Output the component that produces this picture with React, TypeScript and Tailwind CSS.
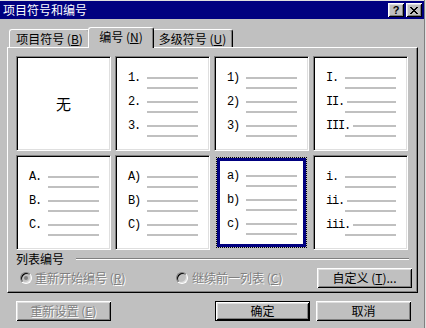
const cjk = "font-['Noto_Sans_CJK_SC','Noto_Sans_CJK_JP',sans-serif]";
const mono = "font-['Liberation_Mono','DejaVu_Sans_Mono',monospace]";

const btn =
  "shadow-[inset_1px_1px_0_#fff,inset_-1px_-1px_0_#000,inset_2px_2px_0_#dfdfdf,inset_-2px_-2px_0_#808080]";
const disabledText = "text-[#808080] [text-shadow:1px_1px_0_#fff]";

const styles = [
  ["1.", "2.", "3."],
  ["1)", "2)", "3)"],
  ["I.", "II.", "III."],
  ["A.", "B.", "C."],
  ["A)", "B)", "C)"],
  ["a)", "b)", "c)"],
  ["i.", "ii.", "iii."],
];

function Item({ n }: { n: string }) {
  return (
    <div className="flex flex-col">
      <div className="flex h-[12px] items-center">
        <span className={`${mono} min-w-[19px] pr-[3px] text-[12px] leading-none tracking-[-1.2px] text-black`}>
          {n}
        </span>
        <span className="h-[2px] flex-1 bg-[#c0c0c0]" />
      </div>
      <div className="ml-[19px] mt-[3px] h-[2px] bg-[#c0c0c0]" />
    </div>
  );
}

function List({ items }: { items: string[] }) {
  return (
    <div className="flex flex-col gap-[7px]">
      {items.map((n) => (
        <Item key={n} n={n} />
      ))}
    </div>
  );
}

function Cell({ items, selected }: { items?: string[]; selected?: boolean }) {
  if (selected) {
    return (
      <div className="h-[95px] w-[95px] p-[2px]">
        <div className="h-full w-full border border-dotted border-black">
          <div className="h-full w-full border-[3px] border-[#000080] bg-white pl-[7px] pr-[6px] pt-[9px]">
            {items && <List items={items} />}
          </div>
        </div>
      </div>
    );
  }
  return (
    <div className="h-[95px] w-[95px] border border-b-white border-l-[#808080] border-r-white border-t-[#808080] bg-white shadow-[inset_1px_1px_0_#000,inset_-1px_-1px_0_#dfdfdf]">
      {items ? (
        <div className="pl-[12px] pr-[11px] pt-[15px]">
          <List items={items} />
        </div>
      ) : (
        <div className="flex h-full items-center justify-center text-[15px] text-black">无</div>
      )}
    </div>
  );
}

function Tab({ label, k, active, w }: { label: string; k: string; active?: boolean; w: string }) {
  return (
    <div
      className={`${w} flex items-center justify-center rounded-t-[3px] border-l border-t border-l-white border-t-white border-r border-r-black bg-[#c0c0c0] shadow-[inset_-1px_0_0_#808080] text-black ${
        active ? "relative z-10 -mx-[2px] -mb-px h-[21px] pb-[2px]" : "h-[18px]"
      }`}
    >
      {label} (<u>{k}</u>)
    </div>
  );
}

function Radio({ checked }: { checked?: boolean }) {
  return (
    <span className="flex h-[12px] w-[12px] items-center justify-center rounded-full border border-b-white border-l-[#808080] border-r-white border-t-[#808080] bg-[#c0c0c0] shadow-[inset_1px_1px_0_#000,inset_-1px_-1px_0_#dfdfdf]">
      {checked && <span className="h-[4px] w-[4px] rounded-full bg-[#808080]" />}
    </span>
  );
}

export default function App() {
  return (
    <div className={`flex h-[328px] w-[426px] overflow-hidden bg-[#c0c0c0] ${cjk} text-[12px] leading-none`}>
      <div className="flex w-[424px] flex-col">
        <div className="h-px bg-[#dfdfdf]" />
        {/* title bar */}
        <div className="flex h-[18px] items-center justify-between bg-[#000080] pl-[3px] pr-[2px] text-white">
          <span>项目符号和编号</span>
          <div className="flex gap-[2px]">
            <div className={`flex h-[14px] w-[16px] items-center justify-center bg-[#c0c0c0] ${btn} font-['Liberation_Sans',sans-serif] text-[11px] font-bold text-black`}>
              ?
            </div>
            <div className={`flex h-[14px] w-[16px] items-center justify-center bg-[#c0c0c0] ${btn}`}>
              <svg width="8" height="7" viewBox="0 0 8 7" shapeRendering="crispEdges">
                <path d="M0 0h2v1h-2zM6 0h2v1h-2zM1 1h2v1h-2zM5 1h2v1h-2zM2 2h4v1h-4zM3 3h2v1h-2zM2 4h4v1h-4zM1 5h2v1h-2zM5 5h2v1h-2zM0 6h2v1h-2zM6 6h2v1h-2z" fill="#000" />
              </svg>
            </div>
          </div>
        </div>

        {/* tabs */}
        <div className="relative z-10 flex h-[28px] items-end pl-[9px]">
          <Tab label="项目符号" k="B" w="w-[81px]" />
          <Tab label="编号" k="N" w="w-[66px]" active />
          <Tab label="多级符号" k="U" w="w-[81px]" />
        </div>

        {/* panel */}
        <div className="ml-[7px] flex h-[246px] w-[411px] flex-col border border-b-black border-l-white border-r-black border-t-white px-[8px] pt-[8px] shadow-[inset_-1px_-1px_0_#808080]">
          <div className="grid grid-cols-[repeat(4,95px)] gap-[4px]">
            <Cell />
            <Cell items={styles[0]} />
            <Cell items={styles[1]} />
            <Cell items={styles[2]} />
            <Cell items={styles[3]} />
            <Cell items={styles[4]} />
            <Cell items={styles[5]} selected />
            <Cell items={styles[6]} />
          </div>

          <div className="mt-[3px] flex h-[12px] items-center text-black">
            <span>列表编号</span>
            <span className="ml-[12px] h-[2px] flex-1 border-b border-t border-b-white border-t-[#808080]" />
          </div>

          <div className="mt-[3px] flex h-[20px] items-center">
            <div className="flex w-[160px] items-center pl-[4px]">
              <Radio checked />
              <span className={`ml-[3px] ${disabledText}`}>
                重新开始编号 (<u>R</u>)
              </span>
            </div>
            <Radio />
            <span className={`ml-[4px] ${disabledText}`}>
              继续前一列表 (<u>C</u>)
            </span>
            <div className={`-mr-[3px] ml-auto flex h-[20px] w-[95px] items-center justify-center text-black ${btn}`}>
              自定义 (<u>T</u>)...
            </div>
          </div>
        </div>

        {/* bottom buttons */}
        <div className="mt-[8px] flex pl-[16px] pr-[13px]">
          <div className={`flex h-[20px] w-[95px] items-center justify-center ${btn} ${disabledText}`}>
            重新设置 (<u>E</u>)
          </div>
          <div className={`ml-auto flex h-[20px] w-[95px] items-center justify-center border border-black text-black ${btn}`}>
            确定
          </div>
          <div className={`ml-[6px] flex h-[20px] w-[95px] items-center justify-center text-black ${btn}`}>
            取消
          </div>
        </div>
      </div>
      <div className="w-px bg-[#808080]" />
      <div className="w-px bg-[#dfdfdf]" />
    </div>
  );
}
